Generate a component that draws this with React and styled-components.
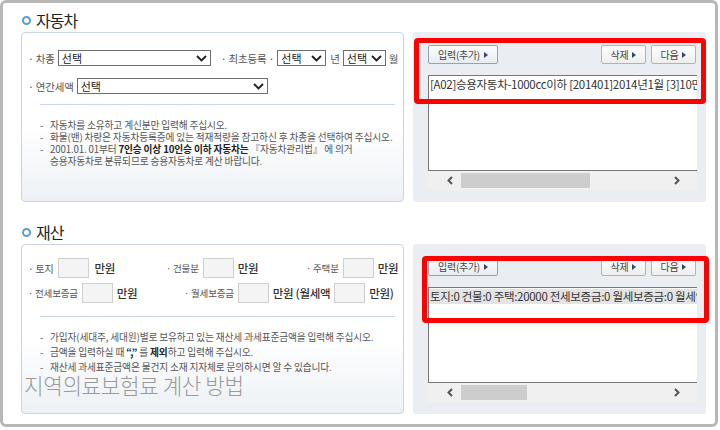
import React from "react";
import styled, { createGlobalStyle } from "styled-components";

const Global = createGlobalStyle`
  html, body { margin: 0; padding: 0; background: #fff; }
  body { font-family: "Noto Sans CJK KR", "Noto Sans", sans-serif; }
  * { box-sizing: border-box; }
`;

const Frame = styled.div`
  position: relative;
  width: 718px;
  height: 427px;
  border: 3px solid #b7b7b7;
  border-radius: 6px;
  padding: 5px 9px 10px 18px;
  display: flex;
  flex-direction: column;
  gap: 18px;
`;

const Section = styled.section`
  display: flex;
  flex-direction: column;
`;

const Title = styled.h2`
  margin: 0;
  height: 24px;
  display: flex;
  align-items: center;
  gap: 5px;
  padding-left: 1px;
  font-size: 16px;
  font-weight: 400;
  letter-spacing: -1px;
  color: #222;
`;

const Ring = styled.span`
  width: 9px;
  height: 9px;
  border: 2px solid #5b9bd8;
  border-radius: 50%;
`;

const PanelRow = styled.div`
  display: grid;
  grid-template-columns: 383px 293px;
  gap: 9px;
  height: 170px;
`;

const FormPanel = styled.div`
  border: 1px solid #c8d5e4;
  border-radius: 4px;
  background: linear-gradient(to bottom, #ffffff 55%, #edf1f5 100%);
  padding: ${(p) => p.$pt}px 6px 0 6px;
  display: flex;
  flex-direction: column;
`;

const Rows = styled.div`
  display: flex;
  flex-direction: column;
  gap: ${(p) => p.$gap}px;
`;

const Row = styled.div`
  display: flex;
  align-items: center;
  gap: 3px;
  height: ${(p) => p.$h}px;
`;

const Label = styled.span`
  font-size: ${(p) => p.$fs || 9.5}px;
  color: #555;
  letter-spacing: -0.2px;
  white-space: nowrap;
  margin-left: ${(p) => p.$ml || 0}px;
`;

const Select = styled.div`
  width: ${(p) => p.$w}px;
  height: 16px;
  border: 1px solid #6f6f6f;
  background: #fff;
  display: flex;
  align-items: center;
  justify-content: space-between;
  padding: 0 3px 0 3px;
  font-size: 11px;
  color: #222;
  flex-shrink: 0;
`;

const Chevron = () => (
  <svg width="11" height="7" viewBox="0 0 11 7">
    <polyline points="1,1 5.5,5.5 10,1" fill="none" stroke="#1e1e1e" strokeWidth="1.8" />
  </svg>
);

const Divider = styled.div`
  height: 1px;
  background: #c8d5e4;
  margin: ${(p) => p.$mt}px 2px 0 12px;
`;

const Notes = styled.ul`
  list-style: none;
  margin: ${(p) => p.$mt}px 0 0 0;
  padding: 0 0 0 12px;
  font-size: 9.7px;
  letter-spacing: -0.15px;
  line-height: ${(p) => p.$lh}px;
  color: #555;
`;

const Note = styled.li`
  display: flex;
  white-space: nowrap;
  &::before {
    content: "-";
    width: 10px;
    flex-shrink: 0;
  }
  b {
    color: #222;
    font-weight: 700;
  }
`;

const Group = styled.div`
  display: flex;
  align-items: center;
  gap: ${(p) => p.$gap || 4}px;
  width: ${(p) => (p.$w ? `${p.$w}px` : "auto")};
  flex-shrink: 0;
`;

const Input = styled.div`
  width: 31px;
  height: 20px;
  border: 1px solid #cfcfcf;
  background: #f4f4f4;
  flex-shrink: 0;
`;

const Unit = styled.span`
  font-size: 11.5px;
  font-weight: 500;
  color: #333;
  letter-spacing: -0.3px;
  white-space: nowrap;
`;

const ListPanel = styled.div`
  position: relative;
  background: #eaeef3;
  border-radius: 3px;
  padding: 13px 9px 12px 15px;
  display: flex;
  flex-direction: column;
`;

const ButtonBar = styled.div`
  display: flex;
  gap: 5px;
  height: 19px;
  margin-right: 1px;
`;

const Spacer = styled.div`
  flex: 1;
`;

const Btn = styled.button`
  width: ${(p) => p.$w}px;
  height: 19px;
  padding: 0;
  border: 1px solid ${(p) => (p.$primary ? "#8ea3bd" : "#b3b3b3")};
  border-radius: 2px;
  background: ${(p) =>
    p.$primary
      ? "linear-gradient(#fdfdfe, #e8ecf1)"
      : "linear-gradient(#ffffff, #eeeeee)"};
  font-family: inherit;
  font-size: 10px;
  color: #444;
  display: flex;
  align-items: center;
  justify-content: center;
  gap: 4px;
  letter-spacing: -0.3px;
`;

const Tri = () => (
  <svg width="4" height="6" viewBox="0 0 4 6">
    <polygon points="0,0 4,3 0,6" fill="#34466a" />
  </svg>
);

const ListBox = styled.div`
  margin-top: 11px;
  height: 96px;
  border: 1px solid #777;
  border-right: none;
  background: #fff;
  overflow: hidden;
  white-space: nowrap;
  padding-top: 1px;
`;

const Item = styled.div`
  height: 15px;
  line-height: 15px;
  font-size: 11.5px;
  letter-spacing: -0.3px;
  color: #333;
  padding-left: 1px;
  background: ${(p) => (p.$sel ? "#e4e4e4" : "transparent")};
`;

const HScroll = styled.div`
  height: 19px;
  background: #f0f0f0;
  display: flex;
  align-items: center;
`;

const Thumb = styled.div`
  height: 15px;
  background: #cdcdcd;
`;

const Arrow = styled.svg`
  flex-shrink: 0;
  margin: 0 ${(p) => p.$mr}px 0 ${(p) => p.$ml}px;
`;

const Highlight = styled.div`
  position: absolute;
  border: 5px solid #ff0000;
  border-radius: 4px;
  pointer-events: none;
`;

const Watermark = styled.div`
  position: absolute;
  left: 21px;
  top: 371px;
  font-size: 21.3px;
  font-weight: 300;
  line-height: 21px;
  letter-spacing: -0.4px;
  color: #9a9a9a;
  white-space: nowrap;
  pointer-events: none;
`;

const Scroll = ({ thumb }) => (
  <HScroll>
    <Arrow $ml={19} $mr={8} width="6" height="9" viewBox="0 0 6 9">
      <polyline points="5,1 1.5,4.5 5,8" fill="none" stroke="#555" strokeWidth="2" />
    </Arrow>
    <Thumb style={{ width: thumb }} />
    <Spacer />
    <Arrow $ml={0} $mr={17} width="6" height="9" viewBox="0 0 6 9">
      <polyline points="1,1 4.5,4.5 1,8" fill="none" stroke="#555" strokeWidth="2" />
    </Arrow>
  </HScroll>
);

const ListSide = ({ text, sel, thumb, box }) => (
  <ListPanel>
    <ButtonBar>
      <Btn $primary $w={70}>
        입력(추가) <Tri />
      </Btn>
      <Spacer />
      <Btn $w={45}>
        삭제 <Tri />
      </Btn>
      <Btn $w={45}>
        다음 <Tri />
      </Btn>
    </ButtonBar>
    <ListBox>
      <Item $sel={sel}>{text}</Item>
    </ListBox>
    <Scroll thumb={thumb} />
    <Highlight style={{ left: box[0], top: box[1], width: box[2], height: box[3] }} />
  </ListPanel>
);

export default function App() {
  return (
    <>
      <Global />
      <Frame>
        <Section>
          <Title>
            <Ring />
            자동차
          </Title>
          <PanelRow>
            <FormPanel $pt={17}>
              <Rows $gap={12}>
                <Row $h={16}>
                  <Label $fs={10.5}>· 차종</Label>
                  <Select $w={153}>
                    선택 <Chevron />
                  </Select>
                  <Label $fs={10.5} $ml={7}>· 최초등록 ·</Label>
                  <Select $w={49}>
                    선택 <Chevron />
                  </Select>
                  <Label $fs={10.5} $ml={1}>년</Label>
                  <Select $w={43}>
                    선택 <Chevron />
                  </Select>
                  <Label $fs={10.5}>월</Label>
                </Row>
                <Row $h={16}>
                  <Label $fs={10.5}>· 연간세액</Label>
                  <Select $w={191}>
                    선택 <Chevron />
                  </Select>
                </Row>
              </Rows>
              <Divider $mt={10} />
              <Notes $mt={14} $lh={12}>
                <Note>자동차를 소유하고 계신분만 입력해 주십시오.</Note>
                <Note>화물(밴) 차량은 자동차등록증에 있는 적재적량을 참고하신 후 차종을 선택하여 주십시오.</Note>
                <Note>
                  <span>
                    2001.01. 01부터 <b>7인승 이상 10인승 이하 자동차는</b> 『자동차관리법』 에 의거
                    <br />
                    승용자동차로 분류되므로 승용자동차로 계산 바랍니다.
                  </span>
                </Note>
              </Notes>
            </FormPanel>
            <ListSide
              text="[A02]승용자동차-1000cc이하 [201401]2014년1월 [3]10만원이하"
              thumb={129}
              box={[1, 6, 292, 66]}
            />
          </PanelRow>
        </Section>
        <Section>
          <Title>
            <Ring />
            재산
          </Title>
          <PanelRow>
            <FormPanel $pt={13}>
              <Rows $gap={5}>
                <Row $h={20}>
                  <Group $w={135} $gap={5}>
                    <Label $fs={10}>· 토지</Label>
                    <Input />
                    <Unit>만원</Unit>
                  </Group>
                  <Group $w={137}>
                    <Label>· 건물분</Label>
                    <Input />
                    <Unit>만원</Unit>
                  </Group>
                  <Group>
                    <Label>· 주택분</Label>
                    <Input />
                    <Unit>만원</Unit>
                  </Group>
                </Row>
                <Row $h={20}>
                  <Group $w={153}>
                    <Label>· 전세보증금</Label>
                    <Input />
                    <Unit>만원</Unit>
                  </Group>
                  <Group>
                    <Label>· 월세보증금</Label>
                    <Input />
                    <Unit>만원 (월세액</Unit>
                    <Input />
                    <Unit>만원)</Unit>
                  </Group>
                </Row>
              </Rows>
              <Divider $mt={13} />
              <Notes $mt={13} $lh={15}>
                <Note>가입자(세대주, 세대원)별로 보유하고 있는 재산세 과세표준금액을 입력해 주십시오.</Note>
                <Note>
                  <span>
                    금액을 입력하실 때 <b>“,”</b> 를 <b>제외</b>하고 입력해 주십시오.
                  </span>
                </Note>
                <Note>재산세 과세표준금액은 물건지 소재 지자체로 문의하시면 알 수 있습니다.</Note>
              </Notes>
            </FormPanel>
            <ListSide
              text="토지:0 건물:0 주택:20000 전세보증금:0 월세보증금:0 월세액:0"
              sel
              thumb={66}
              box={[9, 12, 287, 67]}
            />
          </PanelRow>
        </Section>
        <Watermark>지역의료보험료 계산 방법</Watermark>
      </Frame>
    </>
  );
}
